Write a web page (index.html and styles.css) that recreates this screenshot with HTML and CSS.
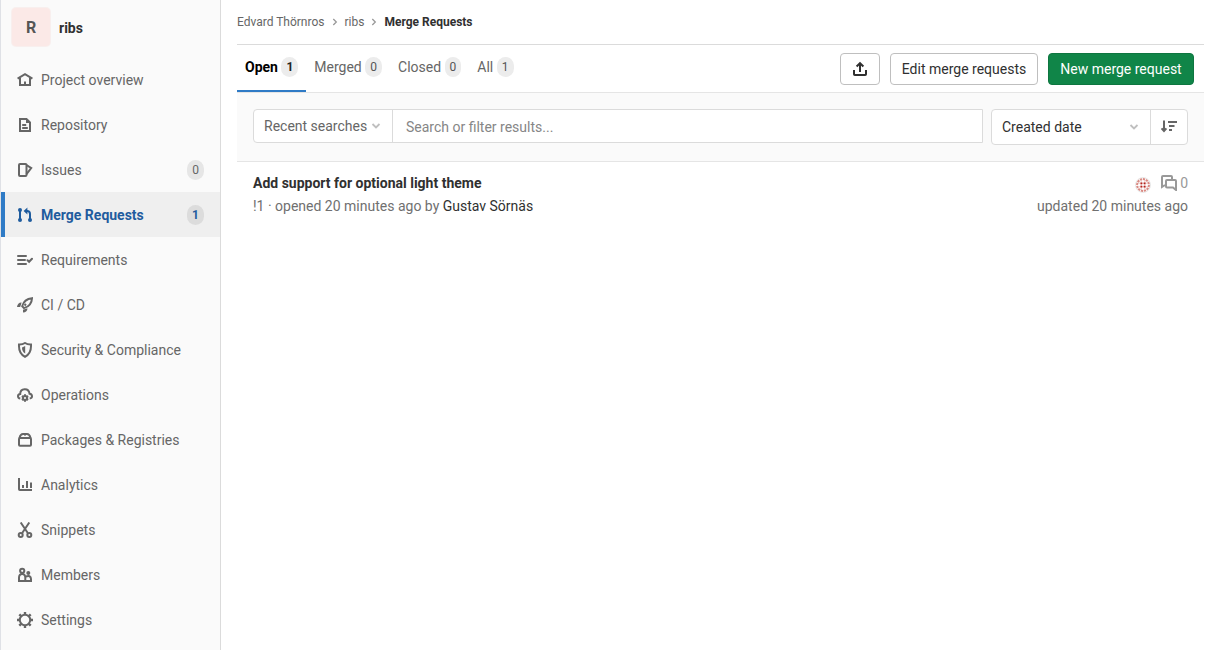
FILE: index.html
```html
<!DOCTYPE html>
<html lang="en">
<head>
<meta charset="utf-8">
<title>Merge Requests · ribs</title>
<link rel="stylesheet" href="styles.css">
</head>
<body>
<div class="layout">
  <aside class="sidebar">
    <a class="project"><span class="avatar">R</span><span class="project-name">ribs</span></a>
    <nav class="nav">
      <a class="nav-item"><svg class="icon" viewBox="0 0 16 16"><path d="M.6 6.600 8 2.200l7.400 4.400M3 6v7h10V6M8 13V9.500"/></svg><span>Project overview</span></a>
      <a class="nav-item"><svg class="icon" viewBox="0 0 16 16"><path d="M3 2h6.500L13 5.500V14H3zM5.200 8h4M5.200 11h5.600"/><path class="fill" d="M9 1.500 13.500 6H9z"/></svg><span>Repository</span></a>
      <a class="nav-item"><svg class="icon" viewBox="0 0 16 16"><rect x="2" y="2" width="7.500" height="12" rx="1"/><path d="M9.500 3.200 14.200 6 9.500 12.200"/></svg><span>Issues</span><span class="badge">0</span></a>
      <a class="nav-item active"><svg class="icon" viewBox="0 0 16 16"><path d="M3 3v10M13 12.500V7a3 3 0 0 0-3-3H8"/><path class="fill" d="M10.400.6v6.800L6.600 4z"/><circle class="fill" cx="3" cy="3" r="2"/><circle class="fill" cx="3" cy="13" r="2"/><circle class="fill" cx="13" cy="13" r="2"/></svg><span>Merge Requests</span><span class="badge">1</span></a>
      <a class="nav-item"><svg class="icon" viewBox="0 0 16 16"><path d="M1 4h8M1 8h7M1 12h8M10.500 8.300l1.600 1.500L15 6.800" stroke-linecap="round"/></svg><span>Requirements</span></a>
      <a class="nav-item"><svg class="icon" viewBox="0 0 16 16"><path d="M5.200 9.200C6.300 5 9.600 1.700 15 1.200c-.2 5-3.600 8.600-8 9.900zM7.500 8.500 9 7"/><path class="fill" d="M0 10c.3-3 2-4.700 4.600-4.600L3.200 10zM6 15.500v-2.800l4.400-1.500c.2 2.600-1.500 4.300-4.400 4.300z"/></svg><span>CI / CD</span></a>
      <a class="nav-item"><svg class="icon" viewBox="0 0 16 16"><path d="M8 1c2 1.300 4 1.600 6 1.500C14.300 8 13 12.300 8 14.800 3 12.300 1.700 8 2 2.500 4 2.600 6 2.300 8 1z"/><path class="fill" d="M8.200 4v7.500C5.900 10.300 5 8.300 5 5.500z"/></svg><span>Security &amp; Compliance</span></a>
      <a class="nav-item"><svg class="icon" viewBox="0 0 16 16"><path d="M3.300 11.600C.3 11.100.2 7.400 3.200 7 3.300 1.100 11.600.4 12.600 6.800c3.200.5 3.200 4.300.1 4.800"/><circle cx="8" cy="11" r="2"/><path d="M8 7.300v1.500m0 4.400v1.600M4.800 9.200l1.500.8m3.400 2 1.500.8m0-3.600-1.500.8m-3.400 2-1.500.8"/></svg><span>Operations</span></a>
      <a class="nav-item"><svg class="icon" viewBox="0 0 16 16"><rect x="2" y="6" width="12" height="7.800" rx="1"/><path d="M2.500 6c.5-2 1.600-3.900 3.500-3.900h4c1.900 0 3 1.900 3.500 3.900"/><path d="M8 2v1.800" stroke-width="1.500"/></svg><span>Packages &amp; Registries</span></a>
      <a class="nav-item"><svg class="icon" viewBox="0 0 16 16"><path d="M2 1v11.200c0 .6.300.8.800.8H15M6 11V8M10 11V4M14 11V5.500"/></svg><span>Analytics</span></a>
      <a class="nav-item"><svg class="icon" viewBox="0 0 16 16"><path d="M3.700.5 10.800 11M12.300.5 5.200 11"/><circle cx="3.700" cy="13" r="2"/><circle cx="12.300" cy="13" r="2"/></svg><span>Snippets</span></a>
      <a class="nav-item"><svg class="icon" viewBox="0 0 16 16"><circle cx="5.200" cy="3.800" r="2.100"/><circle class="fill" cx="11.300" cy="6" r="2"/><path d="M2 14v-3.300C2 8 3.300 7 5.200 7s3.100 1.200 3.100 3.700V14zM9 9.500c2.800-1.200 5-.3 5 2.500v2H8"/></svg><span>Members</span></a>
      <a class="nav-item"><svg class="icon" viewBox="0 0 16 16"><circle cx="8" cy="8" r="5.200"/><path class="teeth" d="M8 0v3M8 13v3M0 8h3M13 8h3M2.300 2.300l2.100 2.100M11.600 11.600l2.100 2.100M13.700 2.300l-2.100 2.100M4.400 11.600l-2.100 2.100"/></svg><span>Settings</span></a>
    </nav>
  </aside>
  <main class="content">
    <div class="crumbs">
      <a>Edvard Thörnros</a><svg class="crumb-arrow" viewBox="0 0 8 8"><path d="m2.300 1 3 3-3 3"/></svg><a>ribs</a><svg class="crumb-arrow" viewBox="0 0 8 8"><path d="m2.300 1 3 3-3 3"/></svg><b>Merge Requests</b>
    </div>
    <div class="top-area">
      <div class="tabs">
        <a class="tab selected">Open<span class="badge">1</span></a>
        <a class="tab">Merged<span class="badge">0</span></a>
        <a class="tab">Closed<span class="badge">0</span></a>
        <a class="tab">All<span class="badge">1</span></a>
      </div>
      <div class="actions">
        <button class="btn btn-icon"><svg class="icon" viewBox="0 0 16 16"><path d="M2 9v4.200c0 .6.300.8.800.8h10.400c.5 0 .8-.2.800-.8V9M8 11V2.500M4.600 5.500 8 2.200l3.400 3.300"/></svg></button>
        <button class="btn btn-edit">Edit merge requests</button>
        <button class="btn btn-new">New merge request</button>
      </div>
    </div>
    <div class="filters">
      <div class="search">
        <div class="recent">Recent searches<svg class="chevron" viewBox="0 0 10 10"><path d="m1.500 3 3.500 3.500L8.500 3"/></svg></div>
        <div class="search-input">Search or filter results...</div>
      </div>
      <div class="sort">
        <div class="sort-by">Created date<svg class="chevron" viewBox="0 0 10 10"><path d="m1.500 3 3.500 3.500L8.500 3"/></svg></div>
        <div class="sort-dir"><svg class="icon" viewBox="0 0 16 16"><path d="M3 1.500v10.500M.6 9.300 3 12l2.400-2.700M7 3h9M8 7h5.500M8 11h3"/></svg></div>
      </div>
    </div>
    <div class="request">
      <div class="request-main">
        <a class="request-title">Add support for optional light theme</a>
        <div class="request-meta">!1 · opened 20 minutes ago by <a class="author">Gustav Sörnäs</a></div>
      </div>
      <div class="request-side">
        <div class="request-stats">
          <svg class="identicon" viewBox="0 0 16 16"><circle class="ring" cx="8" cy="8" r="7.500"/><circle class="dots" cx="8" cy="8" r="5.900"/><path class="light" d="M3 6.200h10M3 9.800h10M6.200 3v10M9.800 3v10"/><path class="dark" d="M5.500 5.500h1.800v1.800H5.500zM8.700 5.500h1.800v1.800H8.700zM5.500 8.700h1.800v1.800H5.500zM8.700 8.700h1.800v1.800H8.700z"/></svg>
          <svg class="icon comments" viewBox="0 0 16 16"><path d="M4 10 1 12V2c0-.7.300-1 1-1h8c.7 0 1 .3 1 1v2.500"/><path d="M6 5h8c.7 0 1 .3 1 1v9l-3-2.500H6c-.7 0-1-.3-1-1V6c0-.7.300-1 1-1z"/></svg>
          <span>0</span>
        </div>
        <div class="updated">updated 20 minutes ago</div>
      </div>
    </div>
  </main>
</div>
</body>
</html>
```
FILE: styles.css
```css
* { box-sizing: border-box; }
body { margin: 0; background: #fff; color: #303030; font: 14px/20px Roboto, "Noto Sans", sans-serif; }
.layout { display: flex; height: 650px; overflow: hidden; }
.icon { width: 16px; height: 16px; flex: none; fill: none; stroke: currentColor; stroke-width: 2; }
.icon .fill { fill: currentColor; stroke: none; }
.icon .teeth { stroke-width: 2.4; }

.sidebar { width: 221px; flex: none; background: #fafafa; border-left: 1px solid #dfe1e6; border-right: 1px solid #dbdbdb; }
.project { display: flex; align-items: center; height: 57px; padding: 0 0 3px 11px; }
.avatar { width: 38px; height: 38px; border-radius: 4px; background: #fbe9e7; box-shadow: 0 0 0 1px #f8efee; color: #555; font-size: 16px; font-weight: 700; line-height: 39px; text-align: center; }
.project-name { margin-left: 9px; padding-top: 2px; font-weight: 700; }
.nav-item { display: flex; align-items: center; gap: 8px; height: 45px; padding: 0 16px; color: #666; }
.nav-item .badge { margin-left: auto; }
.nav-item.active { padding-left: 12px; border-left: 4px solid #2f7bc6; background: #efefef; color: #1f5c9e; font-weight: 700; }
.badge { height: 20px; padding: 0 5px; border-radius: 10px; background: #e6e6e6; font-size: 12px; line-height: 21px; }
.active .badge { background: #dcdcdc; }

.content { width: 967px; margin-left: 16px; }
.crumbs { display: flex; align-items: center; height: 45px; padding-bottom: 1px; border-bottom: 1px solid #dbdbdb; color: #666; font-size: 12px; }
.crumbs b { color: #303030; }
.crumb-arrow { width: 8px; height: 8px; margin: 0 6px; fill: none; stroke: #999; stroke-width: 1.3; }
.top-area { display: flex; justify-content: space-between; height: 48px; border-bottom: 1px solid #e5e5e5; }
.tabs { display: flex; }
.tab { display: flex; gap: 3.5px; height: 47px; padding: 12px 8px 0; color: #666; }
.tab.selected { border-bottom: 2px solid #2f7bc6; color: #000; font-weight: 700; }
.tab .badge { background: #ececec; color: #555; }
.tab.selected .badge { color: #222; }
.actions { display: flex; gap: 10px; padding: 8px 10px 0 0; }
.btn { height: 32px; padding: 0; border: 1px solid #bfbfbf; border-radius: 4px; background: #fff; color: #303030; font: inherit; }
.btn-icon { display: flex; align-items: center; justify-content: center; width: 40px; }
.btn-edit { width: 148px; }
.btn-new { width: 146px; background: #108548; border-color: #0e7640; color: #fff; }

.filters { display: flex; align-items: flex-start; gap: 8px; height: 69px; padding: 16px; background: #fafafa; border-bottom: 1px solid #e5e5e5; }
.search { display: flex; flex: 1; height: 34px; border: 1px solid #dbdbdb; border-radius: 4px 0 0 4px; background: #fff; }
.recent { display: flex; align-items: center; width: 139px; padding-left: 10px; border-right: 1px solid #dbdbdb; color: #666; }
.search-input { padding: 7px 13px; color: #868686; }
.chevron { width: 10px; height: 10px; margin-left: 4px; fill: none; stroke: #bfbfbf; stroke-width: 1.8; }
.sort { display: flex; width: 197px; height: 36px; border: 1px solid #dbdbdb; border-radius: 4px; background: #fff; }
.sort-by { display: flex; align-items: center; justify-content: space-between; width: 159px; padding: 0 11px 0 10px; border-right: 1px solid #dbdbdb; }
.sort-dir { display: flex; flex: 1; align-items: center; justify-content: center; color: #666; }

.request { display: flex; justify-content: space-between; padding: 11px 16px; }
.request-title { display: block; margin-bottom: 3px; font-weight: 700; }
.request-meta, .updated { color: #707070; }
.author { color: #303030; }
.request-stats { display: flex; align-items: center; justify-content: flex-end; height: 20px; margin-bottom: 3px; color: #999; }
.comments { margin-right: 3px; stroke-width: 2; }
.identicon { width: 16px; height: 16px; margin: 4px 10px 0 0; fill: none; }
.ring { stroke: #e8e8e8; }
.dots { stroke: #d98b84; stroke-width: 2; stroke-dasharray: 2.2 .8; }
.light { stroke: #e8bbb7; stroke-width: .8; }
.dark { fill: #b3231c; }
```
